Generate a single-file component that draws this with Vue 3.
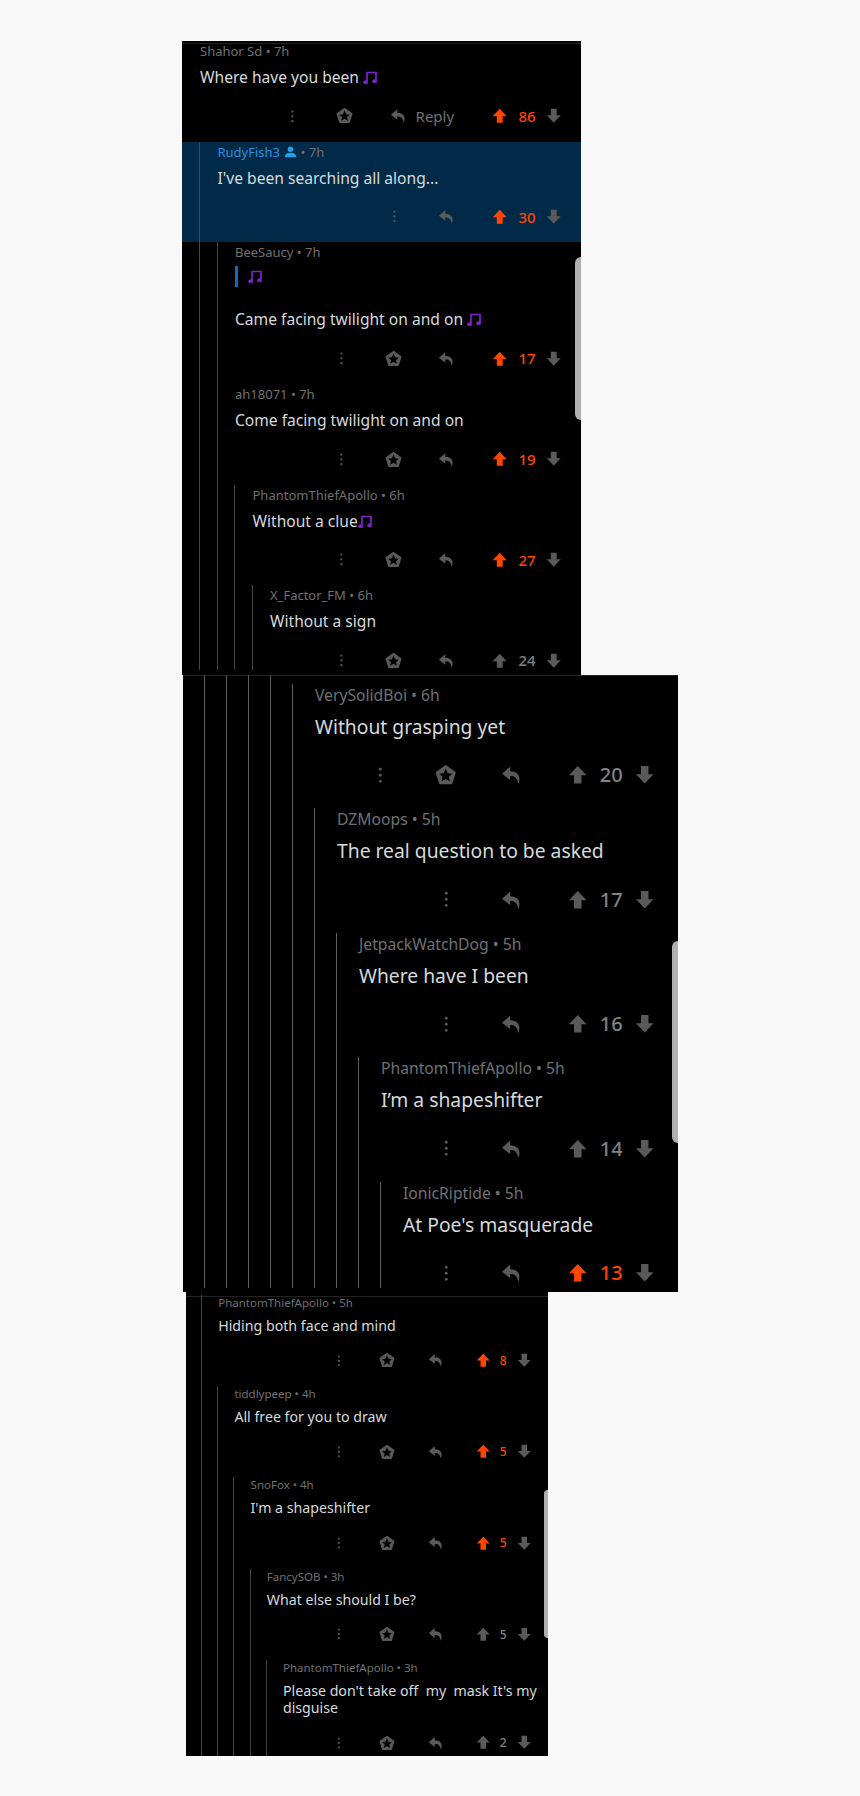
<template>
  <div class="page">
    <section v-for="panel in panels" :key="panel.id" class="panel" :class="panel.id">
      <div
        v-for="(row, r) in panel.rows"
        :key="r"
        class="row"
        :class="{ highlight: row.highlight, quoted: row.quote, last: r === panel.rows.length - 1 }"
      >
        <div class="guides">
          <span
            v-for="g in row.depth"
            :key="g"
            class="guide"
            :class="{ fresh: g === row.depth && row.opens }"
          ></span>
        </div>
        <div class="content">
          <div class="meta">
            <span :class="{ op: row.op }">{{ row.name }}</span>
            <svg v-if="row.op" class="person" viewBox="0 0 16 14">
              <circle cx="8" cy="3.6" r="3.4" />
              <path d="M1 13.5 C1 9.5 4 8 8 8 C12 8 15 9.5 15 13.5 Z" />
            </svg>
            <span> • {{ row.age }}</span>
          </div>
          <div v-if="row.quote" class="quote">
            <svg class="note" viewBox="0 0 14 14">
              <path d="M4 10.5 V1.5 H13 V9.5" />
              <ellipse cx="2.6" cy="11.2" rx="2.4" ry="1.9" />
              <ellipse cx="11.6" cy="10.2" rx="2.4" ry="1.9" />
            </svg>
          </div>
          <div class="body">{{ row.text }}<svg v-if="row.note" class="note" viewBox="0 0 14 14">
              <path d="M4 10.5 V1.5 H13 V9.5" />
              <ellipse cx="2.6" cy="11.2" rx="2.4" ry="1.9" />
              <ellipse cx="11.6" cy="10.2" rx="2.4" ry="1.9" />
            </svg></div>
          <div class="actions">
            <div class="cell">
              <svg class="icon dots" viewBox="0 0 20 20">
                <circle cx="10" cy="3.5" r="1.5" />
                <circle cx="10" cy="10" r="1.5" />
                <circle cx="10" cy="16.5" r="1.5" />
              </svg>
            </div>
            <div v-if="row.award" class="cell">
              <svg class="icon award" viewBox="0 0 20 20">
                <path class="pentagon" d="M10 1.8 L18.6 8 L15.4 18 H4.6 L1.4 8 Z" />
                <path class="star" d="M10 4.2 L11.9 8.6 L16.2 9 L12.9 11.9 L13.9 16.2 L10 13.9 L6.1 16.2 L7.1 11.9 L3.8 9 L8.1 8.6 Z" />
              </svg>
            </div>
            <div class="cell reply" :class="{ wide: row.replyLabel }">
              <svg class="icon" viewBox="0 0 20 20">
                <path d="M8.5 2.5 L1 9 L8.5 15 V11.3 C12.5 11 15.2 13 16.2 18.6 C18.6 12.5 16.8 6.9 8.5 6.7 Z" />
              </svg>
              <span v-if="row.replyLabel" class="reply-label">Reply</span>
            </div>
            <div class="vote">
              <svg class="icon arrow" :class="{ up: row.voted }" viewBox="0 0 20 20">
                <path d="M10 1 L19 10.5 H13.8 V19 H6.2 V10.5 H1 Z" />
              </svg>
            </div>
            <div class="vote score" :class="{ up: row.voted }">{{ row.score }}</div>
            <div class="vote">
              <svg class="icon arrow" viewBox="0 0 20 20">
                <path d="M10 19 L19 9.5 H13.8 V1 H6.2 V9.5 H1 Z" />
              </svg>
            </div>
          </div>
        </div>
      </div>
      <div class="scrollbar"></div>
    </section>
  </div>
</template>

<script setup>
const panels = [
  {
    id: "first",
    rows: [
      { depth: 0, name: "Shahor Sd", age: "7h", text: "Where have you been ", note: true, award: true, replyLabel: true, score: 86, voted: true },
      { depth: 1, opens: true, highlight: true, op: true, name: "RudyFish3", age: "7h", text: "I've been searching all along...", score: 30, voted: true },
      { depth: 2, opens: true, quote: true, name: "BeeSaucy", age: "7h", text: "Came facing twilight on and on ", note: true, award: true, score: 17, voted: true },
      { depth: 2, name: "ah18071", age: "7h", text: "Come facing twilight on and on", award: true, score: 19, voted: true },
      { depth: 3, opens: true, name: "PhantomThiefApollo", age: "6h", text: "Without a clue", note: true, award: true, score: 27, voted: true },
      { depth: 4, opens: true, name: "X_Factor_FM", age: "6h", text: "Without a sign", award: true, score: 24 },
    ],
  },
  {
    id: "second",
    rows: [
      { depth: 5, opens: true, name: "VerySolidBoi", age: "6h", text: "Without grasping yet", award: true, score: 20 },
      { depth: 6, opens: true, name: "DZMoops", age: "5h", text: "The real question to be asked", score: 17 },
      { depth: 7, opens: true, name: "JetpackWatchDog", age: "5h", text: "Where have I been", score: 16 },
      { depth: 8, opens: true, name: "PhantomThiefApollo", age: "5h", text: "I’m a shapeshifter", score: 14 },
      { depth: 9, opens: true, name: "IonicRiptide", age: "5h", text: "At Poe's masquerade", score: 13, voted: true },
    ],
  },
  {
    id: "third",
    rows: [
      { depth: 1, name: "PhantomThiefApollo", age: "5h", text: "Hiding both face and mind", award: true, score: 8, voted: true },
      { depth: 2, opens: true, name: "tiddlypeep", age: "4h", text: "All free for you to draw", award: true, score: 5, voted: true },
      { depth: 3, opens: true, name: "SnoFox", age: "4h", text: "I'm a shapeshifter", award: true, score: 5, voted: true },
      { depth: 4, opens: true, name: "FancySOB", age: "3h", text: "What else should I be?", award: true, score: 5 },
      { depth: 5, opens: true, name: "PhantomThiefApollo", age: "3h", text: "Please don't take off  my  mask It's my disguise", award: true, score: 2 },
    ],
  },
];
</script>

<style>
html,
body {
  background: #f8f8f8;
}
</style>

<style scoped>
.page {
  padding-top: 41px;
  height: 1755px;
  font-family: "Noto Sans", sans-serif;
}

.panel {
  position: relative;
  background: linear-gradient(#222, #222) 0 var(--line-top) / 100% 1px no-repeat #000;
}

.first {
  --line-top: 2px;
  --start: 17px;
  --step: 17.5px;
  --row: 100.7px;
  --last: 85px;
  --guide: #484848;
  --guide-top: 0px;
  --name-size: 13px;
  --name-h: 20px;
  --body-size: 15.6px;
  --body-top: 6px;
  --body-h: 20px;
  --act-top: 19px;
  --act-h: 20px;
  --cell: 53px;
  --vote: 27px;
  --vote-gap: 13px;
  --icon: 15.5px;
  --score-size: 15px;
  --note: 14px;
  --right: 13.5px;
  margin-left: 182px;
  width: 399px;
  padding-bottom: 4.5px;
}

.second {
  --line-top: 0px;
  --start: 21px;
  --step: 22px;
  --row: 124.5px;
  --last: 115px;
  --guide: #5e5e5e;
  --guide-top: 9px;
  --name-size: 15.7px;
  --name-h: 20px;
  --body-size: 19.3px;
  --body-top: 10px;
  --body-h: 24px;
  --act-top: 24px;
  --act-h: 24px;
  --cell: 66px;
  --vote: 33.5px;
  --vote-gap: 16px;
  --icon: 19.5px;
  --score-size: 20px;
  --note: 16px;
  --right: 16.5px;
  margin-left: 183px;
  width: 495px;
  padding-bottom: 4px;
}

.third {
  --line-top: 4px;
  --start: 15px;
  --step: 16.2px;
  --row: 91.2px;
  --last: 96px;
  --guide: #444;
  --guide-top: 0px;
  --name-size: 11.5px;
  --name-h: 16px;
  --body-size: 14.2px;
  --body-top: 6px;
  --body-h: 17.5px;
  --act-top: 16px;
  --act-h: 20px;
  --cell: 48.5px;
  --vote: 20.5px;
  --vote-gap: 12.5px;
  --icon: 14.5px;
  --score-size: 12px;
  --note: 12px;
  --right: 14px;
  margin-left: 186px;
  width: 362px;
  padding-top: 3px;
}

.row {
  display: flex;
  min-height: var(--row);
  padding-left: var(--start);
  padding-right: var(--right);
  box-sizing: border-box;
}

.row.last {
  min-height: var(--last);
}

.highlight {
  background: #012a49;
}

.quoted {
  min-height: calc(var(--row) + 41px);
}

.guides {
  display: flex;
  flex: none;
}

.guide {
  width: var(--step);
  box-sizing: border-box;
  border-left: 1px solid var(--guide);
}

.guide.fresh {
  margin-top: var(--guide-top);
}

.content {
  flex: 1;
  min-width: 0;
  padding-left: 1px;
}

.second .content {
  padding-top: 10px;
}

.meta {
  height: var(--name-h);
  line-height: var(--name-h);
  font-size: var(--name-size);
  color: #6f7173;
  white-space: pre;
}

.op {
  color: #2c8fdd;
}

.person {
  width: 13px;
  height: 12px;
  margin-left: 4px;
  vertical-align: -1px;
  fill: #24a0ed;
}

.quote {
  height: 21px;
  margin: 4px 0 22px;
  padding-left: 10px;
  border-left: 3px solid #0f6cbd;
  display: flex;
  align-items: center;
}

.body {
  margin-top: var(--body-top);
  line-height: var(--body-h);
  font-size: var(--body-size);
  color: #d7dadc;
  white-space: pre-wrap;
}

.third .body {
  margin-right: -12px;
}

.note {
  width: var(--note);
  height: var(--note);
  vertical-align: -2px;
  fill: #7e22ce;
}

.note path {
  fill: none;
  stroke: #7e22ce;
  stroke-width: 1.7;
}

.actions {
  display: flex;
  justify-content: flex-end;
  align-items: center;
  height: var(--act-h);
  margin-top: var(--act-top);
}

.cell,
.vote {
  display: flex;
  align-items: center;
  justify-content: center;
  flex: none;
}

.cell {
  width: var(--cell);
}

.cell.reply {
  margin-right: var(--vote-gap);
}

.cell.wide {
  width: 102px;
  justify-content: flex-start;
  padding-left: 18px;
  box-sizing: border-box;
}

.vote {
  width: var(--vote);
}

.icon {
  width: var(--icon);
  height: var(--icon);
  fill: #5a5a5a;
}

.icon.award,
.reply .icon {
  width: calc(var(--icon) * 1.1);
  height: calc(var(--icon) * 1.1);
}

.icon.dots {
  width: calc(var(--icon) * 0.95);
  height: calc(var(--icon) * 0.95);
}

.arrow.up {
  fill: #ff4500;
}

.pentagon {
  stroke: #5a5a5a;
  stroke-width: 1.6;
  stroke-linejoin: round;
}

.star {
  fill: #000;
}

.reply-label {
  margin-left: 9px;
  font-size: 15px;
  color: #6f7173;
}

.score {
  font-size: var(--score-size);
  font-weight: 500;
  color: #818384;
}

.score.up {
  color: #ff4500;
}

.scrollbar {
  position: absolute;
  right: 0;
  background: #b0b0b0;
  border-radius: 6px 0 0 6px;
}

.first .scrollbar {
  top: 216px;
  width: 6px;
  height: 163px;
}

.second .scrollbar {
  top: 266px;
  width: 6px;
  height: 202px;
}

.third .scrollbar {
  top: 198px;
  width: 4px;
  height: 148px;
}
</style>
